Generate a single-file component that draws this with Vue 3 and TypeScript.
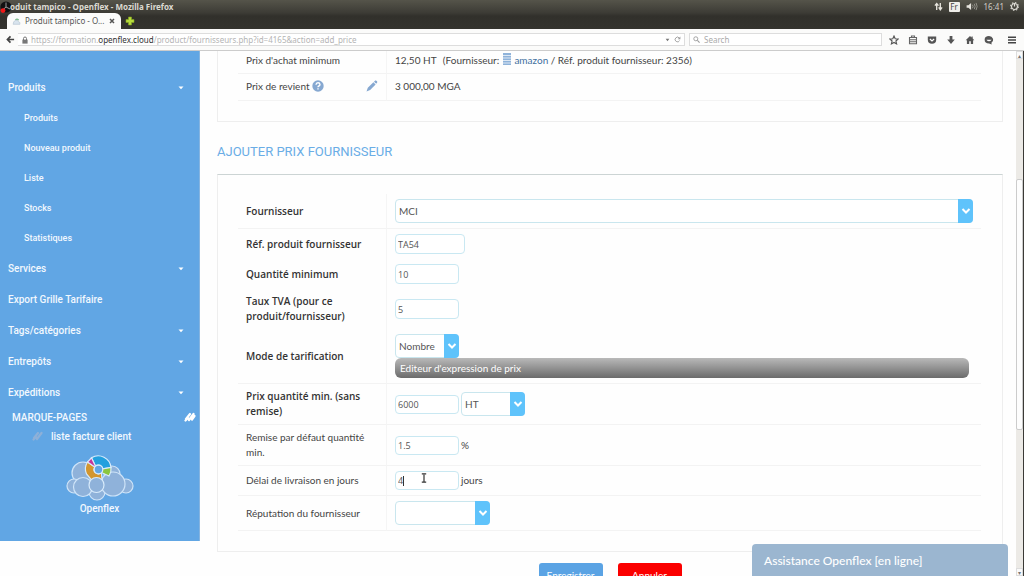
<script setup lang="ts">
import { ref } from 'vue'

interface MenuItem {
  label: string
  caret: boolean
  children: string[]
}

const menu: MenuItem[] = [
  { label: 'Produits', caret: true, children: ['Produits', 'Nouveau produit', 'Liste', 'Stocks', 'Statistiques'] },
  { label: 'Services', caret: true, children: [] },
  { label: 'Export Grille Tarifaire', caret: false, children: [] },
  { label: 'Tags/catégories', caret: true, children: [] },
  { label: 'Entrepôts', caret: true, children: [] },
  { label: 'Expéditions', caret: true, children: [] },
]

const supplier = ref('MCI')
const reference = ref('TA54')
const minQuantity = ref('10')
const vat = ref('5')
const mode = ref('Nombre')
const price = ref('6000')
const taxMode = ref('HT')
const discount = ref('1.5')
const delay = ref('4')
const reputation = ref('')
const search = ref('')
</script>

<template>
  <div class="window">
    <header class="chrome">
      <div class="titlebar">
        <svg class="rec" viewBox="0 0 12 12" aria-hidden="true">
          <circle cx="6" cy="6" r="5.6" fill="#111" />
          <path d="M6 6V1.5M6 6l4 2M6 6L2.5 9" stroke="#999" stroke-width="1" fill="none" />
          <circle cx="3" cy="9.600" r="2.400" fill="#f01818" />
        </svg>
        <span class="wintitle">oduit tampico - Openflex - Mozilla Firefox</span>
        <div class="tray">
          <svg class="t-net" viewBox="0 0 10 10"><path d="M3 9V2M1 4l2-2.4L5 4M7 1v7M5.200 6L7 8.600 9 6" fill="none" stroke="#e6e4dd" stroke-width="1.500" /></svg>
          <span class="lang">Fr</span>
          <svg class="t-vol" viewBox="0 0 12 10"><path d="M0 3.500h2L5 1v8L2 6.500H0z" fill="#e6e4dd" /><path d="M6.500 3q1.500 2 0 4M8.500 2q2 3 0 6M10.500 1q2.400 4 0 8" fill="none" stroke="#9b9a92" /></svg>
          <span class="clock">16:41</span>
          <svg class="t-gear" viewBox="0 0 10 10"><circle cx="5" cy="5" r="3.300" fill="none" stroke="#dedcd5" stroke-width="1.300" /><circle cx="5" cy="5" r="4.300" fill="none" stroke="#dedcd5" stroke-width="1.200" stroke-dasharray="1.600 1.770" /><path d="M5 2v3" stroke="#dedcd5" stroke-width="1.300" /></svg>
        </div>
      </div>
      <div class="tabs">
        <div class="tab">
          <svg class="favicon" viewBox="0 0 8 8"><path d="M1 6.500h6q.6-2-1.200-2.300Q5 2 3.300 3 1 3.500 1 6.500z" fill="#d9e4ee" stroke="#b6c6d4" stroke-width=".6" /><path d="M3 2.600q1.500-1.400 3 .2" stroke="#79b98a" fill="none" /></svg>
          <span class="tabtitle">Produit tampico - O...</span>
          <button class="close" type="button" aria-label="Fermer l'onglet"><svg viewBox="0 0 6 6"><path d="M1 1l4 4M5 1L1 5" stroke="#555" stroke-width="1.500" /></svg></button>
        </div>
        <button class="newtab" type="button" aria-label="Nouvel onglet"><svg viewBox="0 0 10 10"><path d="M3.500 1h3v2.500H9v3H6.500V9h-3V6.500H1v-3h2.500z" fill="#b7dc3c" stroke="#83a51e" stroke-width=".6" /></svg></button>
      </div>
      <div class="toolbar">
        <button class="back" type="button" aria-label="Retour"><svg viewBox="0 0 10 10"><path d="M9 5H2M5 1.500L1.600 5 5 8.500" fill="none" stroke="#444" stroke-width="1.900" /></svg></button>
        <div class="urlbar">
          <svg class="lock" viewBox="0 0 6 8"><path d="M1.500 4V2.500a1.500 1.500 0 013 0V4" fill="none" stroke="#777" /><rect x=".4" y="3.600" width="5.200" height="4" fill="#777" /></svg>
          <span class="url">https://formation.<b>openflex.cloud</b>/product/fournisseurs.php?id=4165&amp;action=add_price</span>
          <svg class="drop" viewBox="0 0 6 4"><path d="M.8.5h4.400L3 3.500z" fill="#777" /></svg>
          <svg class="reload" viewBox="0 0 8 8"><path d="M6.400 5.200A2.700 2.700 0 116 2.200" fill="none" stroke="#999" /><path d="M7.300.6v3H4.300z" fill="#999" /></svg>
        </div>
        <label class="search">
          <svg viewBox="0 0 8 8"><circle cx="3.200" cy="3.200" r="2.300" fill="none" stroke="#999" /><path d="M5 5l2.500 2.500" stroke="#999" stroke-width="1.200" /></svg>
          <input v-model="search" type="text" placeholder="Search" aria-label="Search" />
        </label>
        <div class="tools">
          <button type="button" aria-label="Favoris"><svg viewBox="0 0 10 10"><path d="M5 1l1.200 2.700 2.900.3-2.200 2 .7 2.900L5 7.400 2.400 8.900 3.100 6 .9 4l2.900-.3z" fill="none" stroke="#555" stroke-width="1.100" /></svg></button>
          <button type="button" aria-label="Liste"><svg viewBox="0 0 10 10"><path d="M1.500 2.500h7v6.200h-7zM3.500 2.500v-1.500h3v1.500M2 4.700h6M2 6.700h6" fill="none" stroke="#666" stroke-width="1.100" /></svg></button>
          <button type="button" aria-label="Pocket"><svg viewBox="0 0 10 10"><path d="M.8 1.500h8.400v3.300a4.200 4 0 01-8.400 0z" fill="#555" /><path d="M2.900 4L5 6l2.100-2" fill="none" stroke="#fff" stroke-width="1.200" /></svg></button>
          <button type="button" aria-label="Téléchargements"><svg viewBox="0 0 10 10"><path d="M3.600 1h2.800v3.600h2.400L5 9 1.200 4.600h2.400z" fill="#555" /></svg></button>
          <button type="button" aria-label="Accueil"><svg viewBox="0 0 10 10"><path d="M5 1L.7 5.200h1.200V9h2.300V6.200h1.600V9h2.300V5.200h1.200L7.700 3.600V1.500H6.500v1z" fill="#555" /></svg></button>
          <button type="button" aria-label="Discussion"><svg viewBox="0 0 10 10"><path d="M5 1a4.300 3.700 0 100 7.500l2.700 1-.3-1.800A4 3.700 0 005 1z" fill="#555" /><path d="M2.400 4.700h5.200Q5 8 2.400 4.700" fill="#fff" /></svg></button>
          <button type="button" class="burger" aria-label="Menu"><svg viewBox="0 0 10 10"><path d="M1 2.200h8M1 5h8M1 7.800h8" stroke="#444" stroke-width="1.500" /></svg></button>
        </div>
      </div>
    </header>

    <div class="view">
      <aside class="sidebar">
        <nav>
          <template v-for="item in menu" :key="item.label">
            <a href="#" class="item">{{ item.label }}<svg v-if="item.caret" viewBox="0 0 6 4"><path d="M.5.5h5L3 3.300z" fill="#fff" /></svg></a>
            <a v-for="child in item.children" :key="child" href="#" class="item sub">{{ child }}</a>
          </template>
        </nav>
        <div class="marks">
          <span>MARQUE-PAGES</span>
          <svg viewBox="0 0 12 10"><path d="M2 7l4-5M5 8l4.500-6M1.500 8.500L4 6M8 7.500L10.500 4" stroke="#fff" stroke-width="2.200" stroke-linecap="round" /></svg>
        </div>
        <a href="#" class="mark"><svg viewBox="0 0 12 10"><path d="M2 7l4-5M5 8l4.500-6M1.500 8.500L4 6" stroke="#8db0d8" stroke-width="2.200" stroke-linecap="round" /></svg>liste facture client</a>
        <a href="#" class="brand">
          <svg viewBox="0 0 68 46" aria-hidden="true">
            <g fill="#8fb2da" stroke="#cfe4f8" stroke-width="1.200">
              <circle cx="17" cy="18" r="11" /><circle cx="46" cy="19" r="8" /><circle cx="8" cy="31" r="7" /><circle cx="60" cy="31" r="7" />
              <circle cx="31" cy="37" r="8" /><circle cx="17" cy="32" r="9.500" /><circle cx="47" cy="29" r="12" />
            </g>
            <g stroke="#d8ebfb" stroke-width="1.200">
              <path d="M29.500 11.200L25.500 2.800A12.800 12.800 0 0145 12.500l-8.300 1.400A4.300 4.300 0 0029.500 11.200z" fill="#23a0de" />
              <path d="M36.600 13.900l8.400-1.400a12.800 12.800 0 01-2 8.500l-7.600-3.500z" fill="#8bc63f" />
              <path d="M28.800 12L21.500 7a12.800 12.800 0 00-1 12l5 6H36l-.6-7.500A4.300 4.300 0 0128.800 12z" fill="#d3962f" />
              <path d="M29.500 11.200L25.500 2.800 21.500 7l7.300 5z" fill="#c5359b" />
              <circle cx="32.500" cy="14.500" r="4.300" fill="#61a6e4" />
              <circle cx="30.500" cy="30" r="7.500" fill="#8fb2da" />
            </g>
          </svg>
          Openflex
        </a>
      </aside>

      <main class="content">
        <section class="card summary">
          <table>
            <tbody>
              <tr>
                <th scope="row">Prix d'achat minimum</th>
                <td>12,50 HT <span class="supplier">(Fournisseur: <svg class="building" viewBox="0 0 10 12"><path d="M1 0h8v12H1z" fill="#8fb3da" /><path d="M0 2.500h10M0 5h10M0 7.500h10M0 10h10" stroke="#fff" stroke-width=".7" /></svg> <a href="#">amazon</a> / Réf. produit fournisseur: 2356)</span></td>
              </tr>
              <tr>
                <th scope="row"><div class="cost">Prix de revient <svg class="help" viewBox="0 0 12 12"><circle cx="6" cy="6" r="5.700" fill="#86a8d1" /><path d="M4 4.700Q4.200 2.800 6 2.800T8 4.600Q8 5.600 6.900 6 6 6.400 6 7.300M6 8.300v1.300" fill="none" stroke="#fff" stroke-width="1.400" /></svg>
                  <svg class="pencil" viewBox="0 0 12 12"><path d="M.5 11.500l1.300-3.700 5.600-5.500 2.200 2.200-5.500 5.600zM8 1.700L9.200.6q.8-.5 1.600.3t.4 1.600L10.200 3.800z" fill="#86a8d1" /></svg></div></th>
                <td>3 000,00 MGA</td>
              </tr>
            </tbody>
          </table>
        </section>

        <h2>Ajouter prix fournisseur</h2>

        <form @submit.prevent>
          <section class="card entry">
            <table>
              <tbody>
                <tr>
                  <th scope="row" class="req"><label for="supplier">Fournisseur</label></th>
                  <td><span class="select wide"><select id="supplier" v-model="supplier"><option>MCI</option></select><span class="arrow"><svg viewBox="0 0 10 6"><path d="M1.500 1L5 4.500 8.500 1" /></svg></span></span></td>
                </tr>
                <tr class="plain">
                  <th scope="row" class="req"><label for="reference">Réf. produit fournisseur</label></th>
                  <td><input id="reference" v-model="reference" class="ref" type="text" /></td>
                </tr>
                <tr class="plain">
                  <th scope="row" class="req"><label for="qty">Quantité minimum</label></th>
                  <td><input id="qty" v-model="minQuantity" type="text" /></td>
                </tr>
                <tr class="plain">
                  <th scope="row" class="req"><label for="vat">Taux TVA (pour ce produit/fournisseur)</label></th>
                  <td><input id="vat" v-model="vat" type="text" /></td>
                </tr>
                <tr>
                  <th scope="row" class="req"><label for="mode">Mode de tarification</label></th>
                  <td>
                    <div class="stack">
                      <span class="select small"><select id="mode" v-model="mode"><option>Nombre</option></select><span class="arrow"><svg viewBox="0 0 10 6"><path d="M1.500 1L5 4.500 8.500 1" /></svg></span></span>
                      <button class="editor" type="button">Editeur d'expression de prix</button>
                    </div>
                  </td>
                </tr>
                <tr>
                  <th scope="row" class="req"><label for="price">Prix quantité min. (sans remise)</label></th>
                  <td>
                    <div class="line">
                      <input id="price" v-model="price" type="text" />
                      <span class="select small"><select v-model="taxMode" aria-label="Taxe"><option>HT</option></select><span class="arrow"><svg viewBox="0 0 10 6"><path d="M1.500 1L5 4.500 8.500 1" /></svg></span></span>
                    </div>
                  </td>
                </tr>
                <tr>
                  <th scope="row"><label for="discount">Remise par défaut quantité min.</label></th>
                  <td><div class="line"><input id="discount" v-model="discount" type="text" />%</div></td>
                </tr>
                <tr>
                  <th scope="row"><label for="delay">Délai de livraison en jours</label></th>
                  <td>
                    <div class="line">
                      <span class="active">
                        <input id="delay" v-model="delay" type="text" />
                        <i class="textcaret"></i>
                        <svg class="pointer" viewBox="0 0 6 10"><path d="M.8.800h1.600L3 1.300l.6-.5h1.600M3 1.300v7.400M.8 9.200h1.600L3 8.700l.6.500h1.600" fill="none" stroke="#333" stroke-width="1.200" /></svg>
                      </span>jours
                    </div>
                  </td>
                </tr>
                <tr>
                  <th scope="row"><label for="reputation">Réputation du fournisseur</label></th>
                  <td><span class="select medium"><select id="reputation" v-model="reputation"><option value=""></option></select><span class="arrow"><svg viewBox="0 0 10 6"><path d="M1.500 1L5 4.500 8.500 1" /></svg></span></span></td>
                </tr>
              </tbody>
            </table>
          </section>
          <div class="actions">
            <button type="submit" class="save">Enregistrer</button>
            <button type="button" class="cancel">Annuler</button>
          </div>
        </form>
      </main>

      <div class="scrollbar" aria-hidden="true">
        <span class="cap">▴</span>
        <span class="before"></span>
        <span class="thumb"></span>
        <span class="after"></span>
        <span class="cap">▾</span>
      </div>
      <button type="button" class="chat">Assistance Openflex [en ligne]</button>
    </div>
  </div>
</template>

<style>
body {
  margin: 0;
  background: #fefefe;
}
</style>

<style scoped>
* {
  box-sizing: border-box;
}
button,
input,
select {
  margin: 0;
  font-family: inherit;
}
button {
  padding: 0;
  border: 0;
  background: none;
}
svg {
  display: block;
  flex: none;
}
a {
  text-decoration: none;
}
.window {
  display: flex;
  flex-direction: column;
  height: 100vh;
  overflow: hidden;
  font-family: Lato, "Open Sans", sans-serif;
  font-size: 10px;
  line-height: 15px;
  color: #444;
}
.chrome {
  flex: none;
  font-family: "Noto Sans", sans-serif;
  font-size: 8px;
  line-height: 12px;
  background: linear-gradient(#55544a 0, #3c3b35 13px, #31302b 16px, #34332e 28px);
}
.titlebar {
  display: flex;
  align-items: center;
  height: 13px;
}
.rec {
  width: 12px;
  height: 12px;
}
.wintitle {
  flex: 1;
  margin-left: -2px;
  font-size: 8px;
  font-weight: 700;
  color: #dcdad2;
}
.tray {
  display: flex;
  align-items: center;
  gap: 6px;
  padding-right: 5px;
  color: #cfcdc5;
}
.t-net,
.t-gear {
  width: 9px;
  height: 9px;
}
.t-vol {
  width: 12px;
  height: 9px;
}
.lang {
  width: 11px;
  font-size: 8px;
  line-height: 10px;
  text-align: center;
  color: #444;
  background: #efeee9;
  border-radius: 1px;
}
.tabs {
  display: flex;
  align-items: center;
  height: 16px;
}
.tab {
  display: flex;
  align-items: center;
  gap: 4px;
  width: 114px;
  height: 16px;
  margin-left: 7px;
  padding: 0 6px 0 5px;
  color: #555;
  background: #fbfbfa;
  border-radius: 6px 6px 0 0;
}
.favicon {
  width: 9px;
  height: 9px;
}
.tabtitle {
  flex: 1;
  white-space: nowrap;
}
.close svg {
  width: 6px;
  height: 6px;
}
.newtab svg {
  width: 10px;
  height: 10px;
  margin-left: 4px;
}
.toolbar {
  display: flex;
  align-items: center;
  height: 22px;
  padding-right: 7px;
  background: #fbfbfa;
  border-bottom: 1px solid #ccc;
}
.back {
  width: 18px;
  height: 18px;
  padding-left: 6px;
}
.back svg {
  width: 9px;
  height: 9px;
}
.urlbar {
  display: flex;
  align-items: center;
  flex: 1;
  height: 13px;
  padding: 0 3px 0 4px;
  background: #fff;
  border: 1px solid #ddd;
  border-left: 0;
}
.lock {
  width: 6px;
  height: 8px;
  margin-right: 3px;
}
.url {
  flex: 1;
  color: #b4b4b4;
  white-space: nowrap;
}
.url b {
  font-weight: 400;
  color: #333;
}
.drop {
  width: 5px;
  height: 4px;
  margin-right: 4px;
}
.reload {
  width: 7px;
  height: 7px;
}
.search {
  display: flex;
  align-items: center;
  gap: 4px;
  width: 193px;
  height: 13px;
  margin-left: 4px;
  padding: 0 3px;
  background: #fff;
  border: 1px solid #ddd;
}
.search svg {
  width: 7px;
  height: 7px;
}
.search input {
  width: 100%;
  height: 11px;
  padding: 0;
  font-size: 8px;
  border: 0;
  outline: 0;
  border-radius: 0;
  background: none;
}
.search input::placeholder {
  color: #aaa;
}
.tools {
  display: flex;
  align-items: center;
  gap: 10px;
  margin-left: 7px;
}
.tools button {
  margin-right: -1px;
}
.tools svg {
  width: 10px;
  height: 10px;
}
.tools .burger {
  margin: 0 0 0 4px;
}

.view {
  position: relative;
  display: flex;
  flex: 1;
  align-items: flex-start;
  min-height: 0;
  border-right: 1px solid #3b3a36;
}
.sidebar {
  flex: none;
  width: 200px;
  padding: 21px 0 25px;
  font-family: Roboto, sans-serif;
  font-weight: 500;
  background: #61a6e4;
  border-right: 1px solid #85b4e0;
}
.sidebar a,
.marks {
  color: #f2f8fe;
}
.item {
  display: flex;
  align-items: center;
  justify-content: space-between;
  height: 31px;
  padding: 0 15px 0 8px;
}
.item svg {
  width: 6px;
  height: 4px;
}
.item.sub {
  height: 30px;
  padding-left: 24px;
  font-size: 9px;
}
.marks {
  display: flex;
  align-items: center;
  justify-content: space-between;
  height: 18px;
  padding: 0 3px 0 12px;
}
.marks svg {
  width: 12px;
  height: 10px;
}
.mark {
  display: flex;
  align-items: center;
  gap: 7px;
  height: 20px;
  padding-left: 32px;
}
.mark svg {
  width: 12px;
  height: 10px;
}
.brand {
  display: flex;
  flex-direction: column;
  align-items: center;
  padding-top: 9px;
}
.brand svg {
  width: 68px;
  height: 46px;
}

.content {
  flex: 1;
  min-width: 0;
  padding: 0 13px 0 17px;
}
.card {
  padding: 0 21px 20px 20px;
  border: 1px solid #eee;
}
.summary {
  border-top: 0;
}
.entry {
  padding-top: 19px;
  border-top-color: #ccd4d4;
}
table {
  width: 100%;
  table-layout: fixed;
  border-spacing: 0;
}
th,
td {
  padding: 5px 8px;
  vertical-align: middle;
  text-align: left;
  font-weight: 400;
  border-bottom: 1px solid #f3f3f3;
}
th {
  width: 149px;
  border-right: 1px solid #f5f5f5;
}
th.req {
  font-family: "Open Sans", sans-serif;
  font-weight: 600;
  color: #333;
}
.plain th,
.plain td {
  border-bottom: 0;
}
.summary th,
.summary td {
  height: 27px;
  padding-top: 2px;
  padding-bottom: 4px;
}
.summary tr:first-child th,
.summary tr:first-child td {
  height: 23px;
  padding-top: 0;
}
.supplier {
  margin-left: 4px;
}
.supplier a {
  color: #42709f;
}
.building {
  display: inline-block;
  width: 10px;
  height: 12px;
  vertical-align: -1px;
}
.cost {
  display: flex;
  align-items: center;
  gap: 3px;
}
.help {
  width: 12px;
  height: 12px;
}
.pencil {
  width: 12px;
  height: 12px;
  margin-left: auto;
}
h2 {
  margin: 20px 0 12px;
  font-family: Roboto, sans-serif;
  font-size: 13px;
  line-height: 20px;
  font-weight: 400;
  text-transform: uppercase;
  color: #6aade6;
}
td input,
.select {
  vertical-align: top;
}
td input {
  width: 64px;
  height: 19px;
  padding: 0 2px;
  font-family: "Open Sans", sans-serif;
  font-size: 9px;
  color: #555;
  background: #fff;
  border: 1px solid #c9e8f2;
  border-radius: 4px;
  outline: 0;
}
.plain input {
  height: 20px;
}
td .ref {
  width: 70px;
}
.select {
  display: inline-grid;
  height: 24px;
}
.select > * {
  grid-area: 1 / 1;
}
.select select {
  width: 100%;
  padding: 0 18px 0 3px;
  font-size: 10px;
  color: #555;
  appearance: none;
  background: #fff;
  border: 1px solid #c9e6ee;
  border-radius: 4px;
}
.wide {
  width: 100%;
}
.small {
  width: 64px;
}
.medium {
  width: 95px;
}
.arrow {
  display: grid;
  place-items: center;
  justify-self: end;
  width: 15px;
  background: #5fc3fb;
  border-radius: 0 4px 4px 0;
  pointer-events: none;
}
.arrow svg {
  width: 10px;
  height: 6px;
  fill: none;
  stroke: #fff;
  stroke-width: 2px;
}
.stack {
  display: flex;
  flex-direction: column;
  align-items: flex-start;
}
.editor {
  width: calc(100% - 4px);
  height: 20px;
  padding-left: 5px;
  font-size: 10px;
  text-align: left;
  color: #fff;
  background: linear-gradient(#b9b9b9, #6b6b6b);
  border-radius: 6px;
}
.line {
  display: flex;
  align-items: center;
  gap: 2px;
}
.active {
  position: relative;
  display: flex;
}
.textcaret {
  position: absolute;
  left: 8px;
  top: 5px;
  width: 1px;
  height: 10px;
  background: #333;
}
.pointer {
  position: absolute;
  left: 26px;
  top: 2px;
  width: 6px;
  height: 10px;
}
.actions {
  display: flex;
  justify-content: center;
  gap: 15px;
  padding-top: 11px;
}
.actions button {
  width: 64px;
  height: 24px;
  font-size: 10px;
  color: #fff;
  border-radius: 3px;
}
.save {
  background: #5aa3e4;
}
.cancel {
  background: #fb0000;
}
.scrollbar {
  display: flex;
  flex-direction: column;
  align-self: stretch;
  width: 7px;
  background: #eceae6;
}
.cap {
  height: 8px;
  font-size: 6px;
  line-height: 8px;
  text-align: center;
  color: #777;
  background: #fafafa;
  border: 1px solid #ddd;
}
.before {
  flex: 120;
}
.thumb {
  flex: 250;
  background: #fdfdfd;
  border: 1px solid #ccc;
  border-radius: 2px;
}
.after {
  flex: 138;
}
.chat {
  position: absolute;
  right: 15px;
  bottom: 0;
  width: 256px;
  height: 32px;
  padding-left: 12px;
  font-size: 12px;
  font-weight: 500;
  text-align: left;
  color: #fff;
  background: #9bb6d0;
  border-radius: 4px 4px 0 0;
}
</style>
